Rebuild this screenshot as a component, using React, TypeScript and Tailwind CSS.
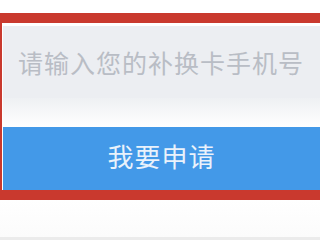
export default function App() {
  return (
    <div
      className="w-[320px] h-[240px] bg-white overflow-hidden flex flex-col"
      style={{ fontFamily: '"Noto Sans CJK SC", "Noto Sans", sans-serif' }}
    >
      <div className="h-[13px] shrink-0" />
      {/* red highlight box */}
      <div className="w-[330px] border-t-[10px] border-b-[10px] border-l-[2px] border-[#c9392e] flex flex-col">
        <div className="pt-[3px] pl-[1px] bg-white flex flex-col">
          <div className="h-[72px] bg-[#eceef2] flex items-center pl-[15px]">
            <span className="text-[25px] leading-none text-[#b9bdc5] tracking-[1px]">请输入您的补换卡手机号</span>
          </div>
          <div className="h-[29px] bg-gradient-to-b from-[#eef0f3] to-white" />
          <div className="h-[63px] bg-[#4399e8] flex items-center justify-center pr-[10px] pb-[5px]">
            <span className="text-[26px] leading-none text-[#eaf2fb] tracking-[1px]">我要申请</span>
          </div>
        </div>
      </div>
      <div className="flex-1 bg-gradient-to-b from-white to-[#fbfbfb]" />
      <div className="h-[3px] bg-[#ebebeb]" />
    </div>
  );
}
